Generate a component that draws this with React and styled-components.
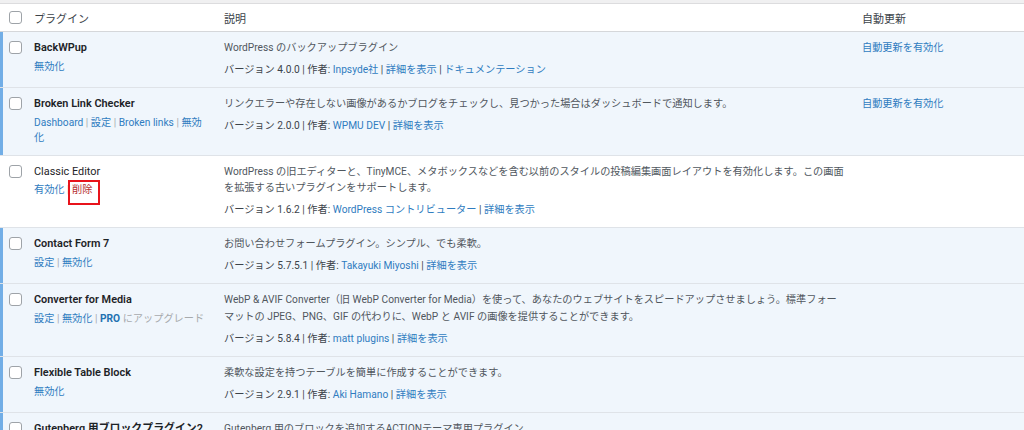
import React from "react";
import styled, { createGlobalStyle } from "styled-components";

const GlobalStyle = createGlobalStyle`
  html, body {
    margin: 0;
    padding: 0;
    background: #f0f0f1;
  }
  body {
    font-family: Roboto, "Noto Sans CJK JP", sans-serif;
    font-size: 10.2px;
    color: #50575e;
  }
`;

const plugins = [
  {
    name: "BackWPup",
    active: true,
    actions: [{ label: "無効化" }],
    description: "WordPress のバックアップブラグイン",
    version: "4.0.0",
    author: "Inpsyde社",
    extra: ["詳細を表示", "ドキュメンテーション"],
    autoUpdate: true,
  },
  {
    name: "Broken Link Checker",
    active: true,
    actions: [
      { label: "Dashboard" },
      { label: "設定" },
      { label: "Broken links" },
      { label: "無効化" },
    ],
    description:
      "リンクエラーや存在しない画像があるかブログをチェックし、見つかった場合はダッシュボードで通知します。",
    version: "2.0.0",
    author: "WPMU DEV",
    extra: ["詳細を表示"],
    autoUpdate: true,
  },
  {
    name: "Classic Editor",
    active: false,
    actions: [{ label: "有効化" }, { label: "削除", kind: "delete", marked: true }],
    description:
      "WordPress の旧エディターと、TinyMCE、メタボックスなどを含む以前のスタイルの投稿編集画面レイアウトを有効化します。この画面を拡張する古いプラグインをサポートします。",
    version: "1.6.2",
    author: "WordPress コントリビューター",
    extra: ["詳細を表示"],
    autoUpdate: false,
  },
  {
    name: "Contact Form 7",
    active: true,
    actions: [{ label: "設定" }, { label: "無効化" }],
    description: "お問い合わせフォームプラグイン。シンプル、でも柔軟。",
    version: "5.7.5.1",
    author: "Takayuki Miyoshi",
    extra: ["詳細を表示"],
    autoUpdate: false,
  },
  {
    name: "Converter for Media",
    active: true,
    actions: [{ label: "設定" }, { label: "無効化" }, { label: "PRO", kind: "pro" }],
    description:
      "WebP & AVIF Converter（旧 WebP Converter for Media）を使って、あなたのウェブサイトをスピードアップさせましょう。標準フォーマットの JPEG、PNG、GIF の代わりに、WebP と AVIF の画像を提供することができます。",
    version: "5.8.4",
    author: "matt plugins",
    extra: ["詳細を表示"],
    autoUpdate: false,
  },
  {
    name: "Flexible Table Block",
    active: true,
    actions: [{ label: "無効化" }],
    description: "柔軟な設定を持つテーブルを簡単に作成することができます。",
    version: "2.9.1",
    author: "Aki Hamano",
    extra: ["詳細を表示"],
    autoUpdate: false,
  },
  {
    name: "Gutenberg 用ブロックプラグイン2",
    active: true,
    actions: [{ label: "無効化" }],
    description: "Gutenberg 用のブロックを追加するACTIONテーマ専用プラグイン",
    version: "1.0.0",
    author: "ACTION",
    extra: ["詳細を表示"],
    autoUpdate: false,
  },
];

const App = () => {
  return (
    <>
      <GlobalStyle />
      <Page>
        <Table>
          <colgroup>
            <col style={{ width: 26 }} />
            <col style={{ width: 190 }} />
            <col />
            <col style={{ width: 170 }} />
          </colgroup>
          <thead>
            <tr>
              <HeadCheck>
                <Checkbox />
              </HeadCheck>
              <HeadCell>プラグイン</HeadCell>
              <HeadCell>説明</HeadCell>
              <HeadCell>自動更新</HeadCell>
            </tr>
          </thead>
          <tbody>
            {plugins.map((p) => (
              <Row key={p.name} $active={p.active}>
                <CheckCell $active={p.active}>
                  <Checkbox />
                </CheckCell>
                <Cell>
                  <Name $active={p.active}>{p.name}</Name>
                  <Actions>
                    {p.actions.map((a, i) => (
                      <React.Fragment key={a.label}>
                        {i > 0 && <Sep> | </Sep>}
                        {a.kind === "pro" ? (
                          <>
                            <Pro>PRO</Pro> <Upgrade>にアップグレード</Upgrade>
                          </>
                        ) : (
                          <ActionLink $delete={a.kind === "delete"} $marked={a.marked}>
                            {a.label}
                          </ActionLink>
                        )}
                      </React.Fragment>
                    ))}
                  </Actions>
                </Cell>
                <Cell>
                  <Description>{p.description}</Description>
                  <Version>
                    バージョン {p.version} | 作者: <Link>{p.author}</Link>
                    {p.extra.map((e) => (
                      <React.Fragment key={e}>
                        {" | "}
                        <Link>{e}</Link>
                      </React.Fragment>
                    ))}
                  </Version>
                </Cell>
                <Cell>{p.autoUpdate && <Link>自動更新を有効化</Link>}</Cell>
              </Row>
            ))}
          </tbody>
        </Table>
      </Page>
    </>
  );
};

const Page = styled.div`
  padding-top: 3px;
  height: 430px;
  overflow: hidden;
`;

const Table = styled.table`
  width: 100%;
  border-collapse: collapse;
  table-layout: fixed;
  border-top: 1px solid #dcdcde;
  background: #fff;
`;

const HeadCheck = styled.th`
  height: 27px;
  padding: 0 0 0 9px;
  border-bottom: 1px solid #d5d7da;
  vertical-align: middle;
  text-align: left;
`;

const HeadCell = styled.th`
  padding: 0 8px;
  border-bottom: 1px solid #d5d7da;
  font-size: 11px;
  font-weight: 400;
  color: #3c434a;
  text-align: left;
  vertical-align: middle;
`;

const Row = styled.tr`
  background: ${(p) => (p.$active ? "#f0f6fc" : "#fff")};
  border-bottom: 1px solid #dfe3e8;
`;

const CheckCell = styled.th`
  padding: 9px 0 0 9px;
  vertical-align: top;
  text-align: left;
  box-shadow: ${(p) => (p.$active ? "inset 3px 0 0 #72aee6" : "none")};
`;

const Checkbox = styled.span`
  display: block;
  width: 11px;
  height: 11px;
  border: 1px solid #9ea3a8;
  border-radius: 3px;
  background: #fff;
`;

const Cell = styled.td`
  padding: 8px 8px 9px;
  vertical-align: top;
  line-height: 15.6px;
`;

const Name = styled.strong`
  display: block;
  font-size: 10.9px;
  font-weight: ${(p) => (p.$active ? 600 : 400)};
  color: #1d2327;
  white-space: nowrap;
`;

const Actions = styled.div`
  padding-top: 3px;
  color: #a7aaad;
`;

const Sep = styled.span`
  color: #a7aaad;
`;

const ActionLink = styled.span`
  color: ${(p) => (p.$delete ? "#b32d2e" : "#2f7cc0")};

  ${(p) =>
    p.$marked &&
    `
    position: relative;
    display: inline-block;
    line-height: 15.6px;

    &::after {
      content: "";
      position: absolute;
      left: -4px;
      right: -8px;
      top: -2px;
      bottom: -7px;
      border: 2px solid #e8131b;
    }
  `}
`;

const Pro = styled.b`
  color: #2271b1;
  font-weight: 700;
`;

const Upgrade = styled.span`
  color: #a7aaad;
`;

const Description = styled.p`
  margin: 0 0 5px;
  line-height: 16.6px;
  color: #50575e;
`;

const Version = styled.div`
  line-height: 16.4px;
  color: #3c434a;
`;

const Link = styled.span`
  color: #2f7cc0;
`;

export default App;
